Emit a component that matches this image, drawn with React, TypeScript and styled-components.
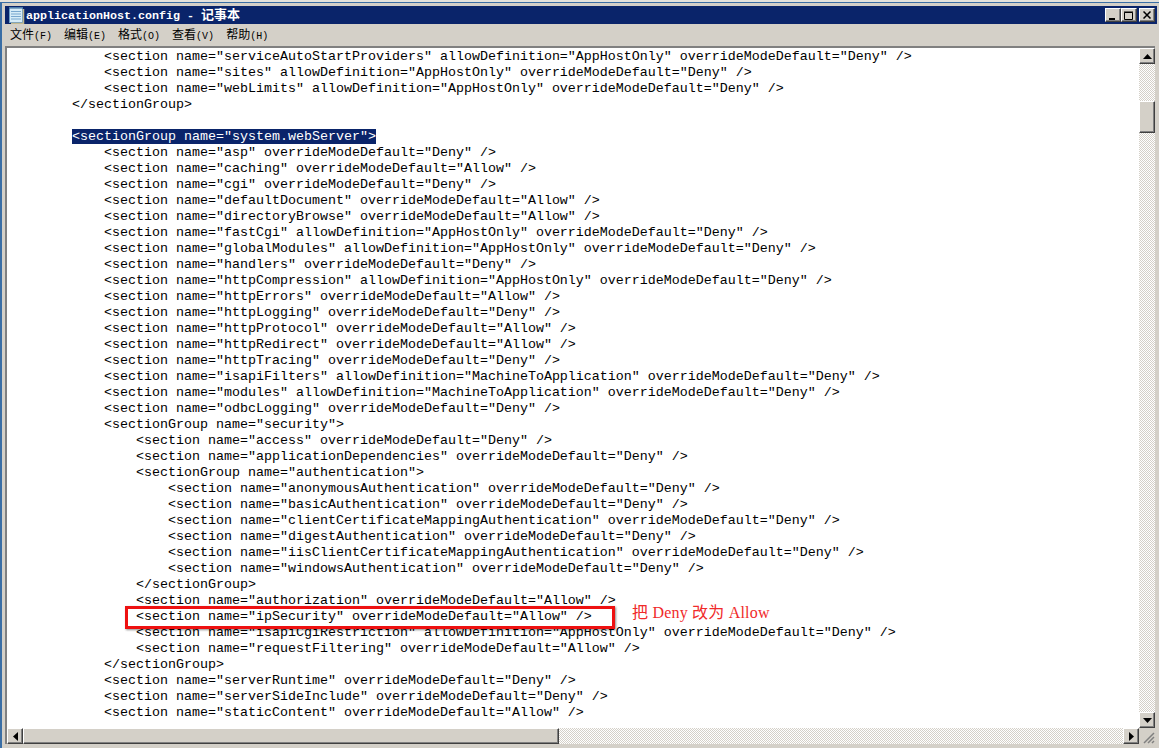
import styled, { createGlobalStyle } from "styled-components";

const GlobalStyle = createGlobalStyle`
  html, body {
    margin: 0;
    padding: 0;
    background: #d4d0c8;
    overflow: hidden;
  }
`;

const FACE = "#d4d0c8";
const CHECKER = `repeating-conic-gradient(#d4d0c8 0% 25%, #ffffff 0% 50%) 0 0 / 2px 2px`;

const Desktop = styled.div`
  width: 1159px;
  height: 748px;
  box-sizing: border-box;
  padding: 2px 0 0 0;
  background: #e4e2dc;
  display: flex;
  flex-direction: column;
`;

const Frame = styled.div`
  flex: 1;
  min-height: 0;
  box-sizing: border-box;
  border-top: 1px solid #3a6ea5;
  border-left: 2px solid #3a6ea5;
  background: ${FACE};
  padding: 3px 2px 4px 3px;
  display: flex;
  flex-direction: column;
`;

const TitleBar = styled.div`
  height: 18px;
  flex: none;
  background: #0a246a;
  display: flex;
  align-items: center;
  padding: 0 2px 0 3px;
  gap: 1px;
`;

const TitleText = styled.div`
  flex: 1;
  color: #fff;
  font: bold 11.67px/18px "Liberation Mono", monospace;
  white-space: pre;
`;

const TitleCjk = styled.span`
  font: bold 13px/18px "Noto Sans CJK SC", sans-serif;
`;

const WinButtons = styled.div`
  display: flex;
  align-items: center;
`;

const WinButton = styled.div<{ $gap?: number }>`
  width: 16px;
  height: 14px;
  box-sizing: border-box;
  margin-left: ${(p) => p.$gap ?? 0}px;
  background: ${FACE};
  border: 1px solid;
  border-color: #fff #404040 #404040 #fff;
  box-shadow: inset -1px -1px 0 #808080;
  display: flex;
  align-items: center;
  justify-content: center;
`;

const MenuBar = styled.div`
  height: 20px;
  flex: none;
  display: flex;
  align-items: center;
  gap: 12px;
  padding: 1px 0 0 5px;
`;

const MenuItem = styled.div`
  font: 12px/18px "Noto Sans CJK SC", sans-serif;
  color: #000;
  white-space: pre;
`;

const MenuKey = styled.span`
  font: 10px/18px "Liberation Mono", monospace;
`;

const Client = styled.div`
  flex: 1;
  min-height: 0;
  margin: 1px 2px 0 0;
  border-top: 2px solid #808080;
  border-left: 2px solid #808080;
  display: grid;
  grid-template-columns: 1fr 16px;
  grid-template-rows: 1fr 16px;
`;

const Editor = styled.div`
  position: relative;
  background: #fff;
  overflow: hidden;
  padding-top: 1px;
`;

const Code = styled.div`
  font: 13.33px/16px "Liberation Mono", "Noto Sans CJK SC", monospace;
  color: #000;
  white-space: pre;
  padding-left: 1px;
`;

const CodeLine = styled.div<{ $raised?: boolean }>`
  height: 16px;
  position: ${(p) => (p.$raised ? "relative" : "static")};
  z-index: ${(p) => (p.$raised ? 1 : "auto")};
`;

const Selected = styled.span`
  background: #0a246a;
  color: #fff;
`;

const RedBox = styled.div`
  position: absolute;
  left: 118px;
  top: 558px;
  width: 490px;
  height: 23px;
  box-sizing: border-box;
  background: #fff;
  border: 3px solid #ee1111;
  box-shadow: 1px 1px 2px rgba(0, 0, 0, 0.45);
`;

const RedNote = styled.div`
  position: absolute;
  left: 625px;
  top: 555px;
  color: #f02a2a;
  font: 16px/20px "Liberation Serif", "Noto Sans CJK SC", serif;
  letter-spacing: 0.2px;
  white-space: pre;
`;

const VScroll = styled.div`
  display: flex;
  flex-direction: column;
  background: ${CHECKER};
`;

const HScroll = styled.div`
  display: flex;
  background: ${CHECKER};
`;

const ScrollButton = styled.div`
  flex: none;
  width: 16px;
  height: 16px;
  box-sizing: border-box;
  background: ${FACE};
  border: 1px solid;
  border-color: #fff #404040 #404040 #fff;
  box-shadow: inset -1px -1px 0 #808080;
  display: flex;
  align-items: center;
  justify-content: center;
`;

const Spacer = styled.div`
  flex: 1;
`;

const VThumb = styled(ScrollButton)`
  height: 32px;
  margin-top: 37px;
`;

const HThumb = styled(ScrollButton)`
  width: 536px;
`;

const Corner = styled.div`
  background: ${FACE};
  display: flex;
  align-items: flex-end;
  justify-content: flex-end;
`;

const Arrow = ({ dir }: { dir: "up" | "down" | "left" | "right" }) => {
  const points = {
    up: "0,5 9,5 4.5,0",
    down: "0,0 9,0 4.5,5",
    left: "5,0 5,9 0,4.5",
    right: "0,0 0,9 5,4.5",
  }[dir];
  const vertical = dir === "up" || dir === "down";
  return (
    <svg width={vertical ? 9 : 5} height={vertical ? 5 : 9}>
      <polygon points={points} fill="#000" />
    </svg>
  );
};

const NotepadIcon = () => (
  <svg width="17" height="18" viewBox="0 0 17 18">
    <rect x="1.5" y="1.5" width="13" height="15" fill="#d6ecf8" stroke="#6f9fc6" />
    <path d="M3 5.5h10M3 8h10M3 10.5h10M3 13h10" stroke="#79a8cf" />
    <path d="M2 1v2M4 1v2M6 1v2M8 1v2M10 1v2M12 1v2M14 1v2" stroke="#2f5f90" />
    <path d="M15.5 3v14.5H3" stroke="#c4b98f" strokeWidth="1.5" fill="none" />
  </svg>
);

const menus = [
  ["文件", "(F)"],
  ["编辑", "(E)"],
  ["格式", "(O)"],
  ["查看", "(V)"],
  ["帮助", "(H)"],
];

const s = (indent: number, text: string) => " ".repeat(indent) + text;
const sec = (attrs: string) => `<section name="${attrs} />`;

const lines: string[] = [
  s(12, sec(`serviceAutoStartProviders" allowDefinition="AppHostOnly" overrideModeDefault="Deny"`)),
  s(12, sec(`sites" allowDefinition="AppHostOnly" overrideModeDefault="Deny"`)),
  s(12, sec(`webLimits" allowDefinition="AppHostOnly" overrideModeDefault="Deny"`)),
  s(8, `</sectionGroup>`),
  ``,
  `@selected`,
  s(12, sec(`asp" overrideModeDefault="Deny"`)),
  s(12, sec(`caching" overrideModeDefault="Allow"`)),
  s(12, sec(`cgi" overrideModeDefault="Deny"`)),
  s(12, sec(`defaultDocument" overrideModeDefault="Allow"`)),
  s(12, sec(`directoryBrowse" overrideModeDefault="Allow"`)),
  s(12, sec(`fastCgi" allowDefinition="AppHostOnly" overrideModeDefault="Deny"`)),
  s(12, sec(`globalModules" allowDefinition="AppHostOnly" overrideModeDefault="Deny"`)),
  s(12, sec(`handlers" overrideModeDefault="Deny"`)),
  s(12, sec(`httpCompression" allowDefinition="AppHostOnly" overrideModeDefault="Deny"`)),
  s(12, sec(`httpErrors" overrideModeDefault="Allow"`)),
  s(12, sec(`httpLogging" overrideModeDefault="Deny"`)),
  s(12, sec(`httpProtocol" overrideModeDefault="Allow"`)),
  s(12, sec(`httpRedirect" overrideModeDefault="Allow"`)),
  s(12, sec(`httpTracing" overrideModeDefault="Deny"`)),
  s(12, sec(`isapiFilters" allowDefinition="MachineToApplication" overrideModeDefault="Deny"`)),
  s(12, sec(`modules" allowDefinition="MachineToApplication" overrideModeDefault="Deny"`)),
  s(12, sec(`odbcLogging" overrideModeDefault="Deny"`)),
  s(12, `<sectionGroup name="security">`),
  s(16, sec(`access" overrideModeDefault="Deny"`)),
  s(16, sec(`applicationDependencies" overrideModeDefault="Deny"`)),
  s(16, `<sectionGroup name="authentication">`),
  s(20, sec(`anonymousAuthentication" overrideModeDefault="Deny"`)),
  s(20, sec(`basicAuthentication" overrideModeDefault="Deny"`)),
  s(20, sec(`clientCertificateMappingAuthentication" overrideModeDefault="Deny"`)),
  s(20, sec(`digestAuthentication" overrideModeDefault="Deny"`)),
  s(20, sec(`iisClientCertificateMappingAuthentication" overrideModeDefault="Deny"`)),
  s(20, sec(`windowsAuthentication" overrideModeDefault="Deny"`)),
  s(16, `</sectionGroup>`),
  s(16, sec(`authorization" overrideModeDefault="Allow"`)),
  s(16, sec(`ipSecurity" overrideModeDefault="Allow"`)),
  s(16, sec(`isapiCgiRestriction" allowDefinition="AppHostOnly" overrideModeDefault="Deny"`)),
  s(16, sec(`requestFiltering" overrideModeDefault="Allow"`)),
  s(12, `</sectionGroup>`),
  s(12, sec(`serverRuntime" overrideModeDefault="Deny"`)),
  s(12, sec(`serverSideInclude" overrideModeDefault="Deny"`)),
  s(12, sec(`staticContent" overrideModeDefault="Allow"`)),
];

const App = () => {
  return (
    <Desktop>
      <GlobalStyle />
      <Frame>
        <TitleBar>
          <NotepadIcon />
          <TitleText>
            applicationHost.config - <TitleCjk>记事本</TitleCjk>
          </TitleText>
          <WinButtons>
            <WinButton>
              <svg width="10" height="9">
                <rect x="1" y="7" width="6" height="2" fill="#000" />
              </svg>
            </WinButton>
            <WinButton>
              <svg width="10" height="9">
                <path d="M0.5 1.5h8v7h-8z M0 1h9" stroke="#000" fill="none" />
              </svg>
            </WinButton>
            <WinButton $gap={2}>
              <svg width="9" height="8">
                <path d="M0.5 0.5l7 7M7.5 0.5l-7 7" stroke="#000" strokeWidth="1.5" />
              </svg>
            </WinButton>
          </WinButtons>
        </TitleBar>
        <MenuBar>
          {menus.map(([name, key]) => (
            <MenuItem key={key}>
              {name}
              <MenuKey>{key}</MenuKey>
            </MenuItem>
          ))}
        </MenuBar>
        <Client>
          <Editor>
            <Code>
              {lines.map((line, i) => (
                <CodeLine key={i} $raised={line.includes("ipSecurity")}>
                  {line === "@selected" ? (
                    <>
                      {" ".repeat(8)}
                      <Selected>{`<sectionGroup name="system.webServer">`}</Selected>
                    </>
                  ) : (
                    line
                  )}
                </CodeLine>
              ))}
            </Code>
            <RedBox />
            <RedNote>把 Deny 改为 Allow</RedNote>
          </Editor>
          <VScroll>
            <ScrollButton>
              <Arrow dir="up" />
            </ScrollButton>
            <VThumb />
            <Spacer />
            <ScrollButton>
              <Arrow dir="down" />
            </ScrollButton>
          </VScroll>
          <HScroll>
            <ScrollButton>
              <Arrow dir="left" />
            </ScrollButton>
            <HThumb />
            <Spacer />
            <ScrollButton>
              <Arrow dir="right" />
            </ScrollButton>
          </HScroll>
          <Corner>
            <svg width="14" height="14">
              <path d="M13 3L3 13M13 7L7 13M13 11L11 13" stroke="#808080" strokeWidth="1.5" />
            </svg>
          </Corner>
        </Client>
      </Frame>
    </Desktop>
  );
};

export default App;
